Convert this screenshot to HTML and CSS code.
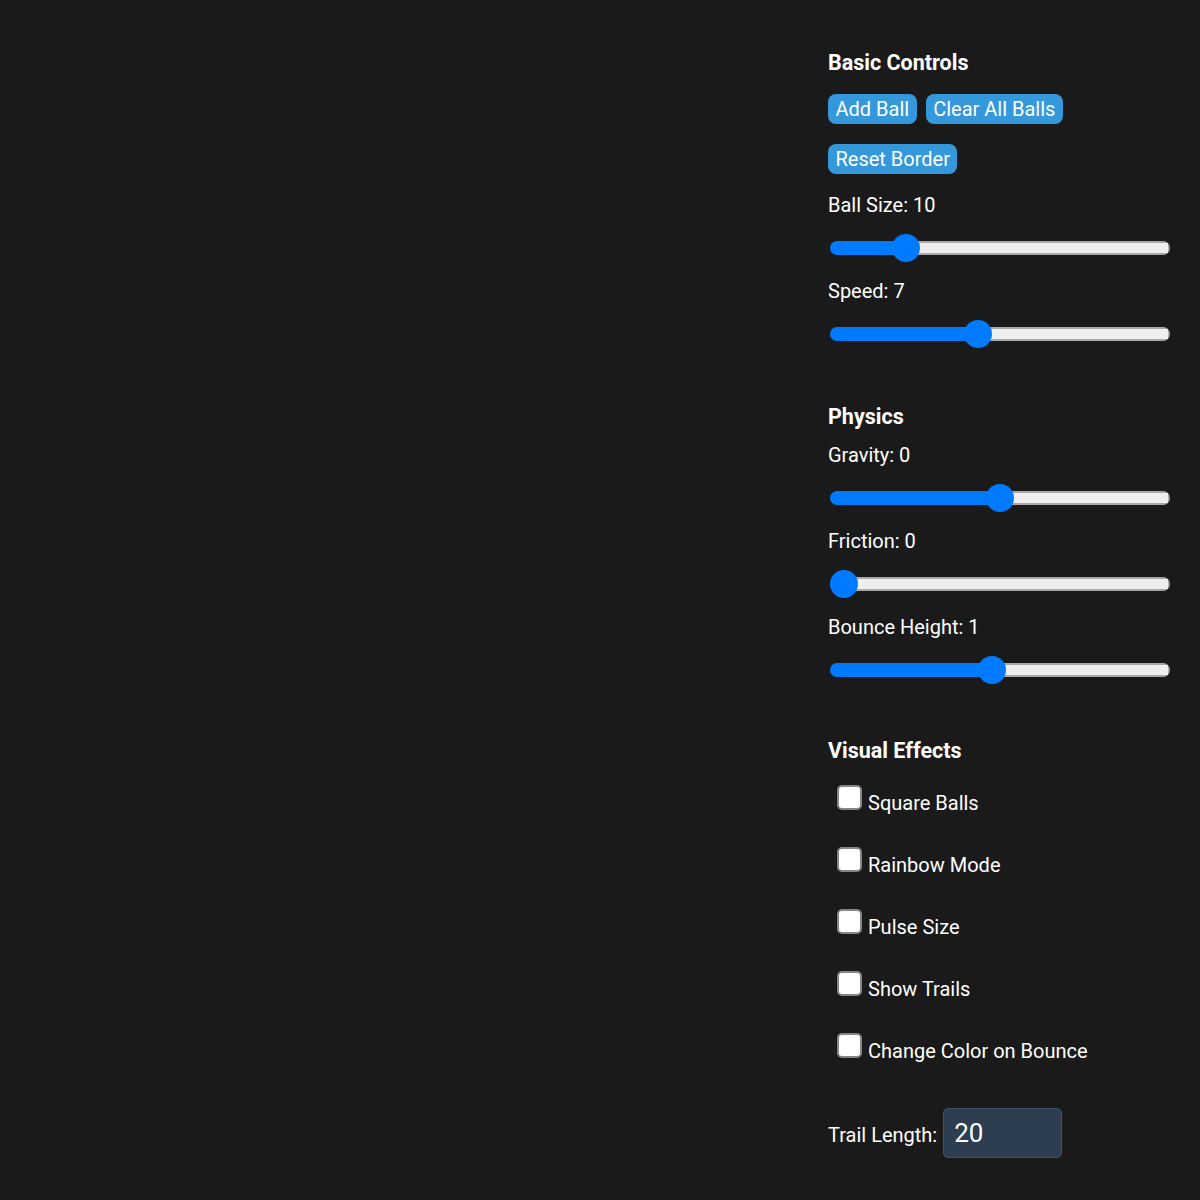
FILE: index.html
```html
<!DOCTYPE html>
<html lang="en">
<head>
<meta charset="utf-8">
<title>Bouncing Balls</title>
<link rel="stylesheet" href="styles.css">
</head>
<body>
  <main class="stage"></main>
  <aside class="panel">
    <section class="group group-basic">
      <h3 class="group-title">Basic Controls</h3>
      <div class="btn-row">
        <button class="btn">Add Ball</button>
        <button class="btn">Clear All Balls</button>
        <button class="btn">Reset Border</button>
      </div>
      <div class="field">
        <label class="field-label">Ball Size: 10</label>
        <input class="slider" type="range" min="5" max="30" value="10" style="--p: 0.2">
      </div>
      <div class="field">
        <label class="field-label">Speed: 7</label>
        <input class="slider" type="range" min="1" max="15" value="7" style="--p: 0.4286">
      </div>
    </section>

    <section class="group">
      <h3 class="group-title">Physics</h3>
      <div class="field">
        <label class="field-label">Gravity: 0</label>
        <input class="slider" type="range" min="-1" max="1" step="0.1" value="0" style="--p: 0.5">
      </div>
      <div class="field">
        <label class="field-label">Friction: 0</label>
        <input class="slider" type="range" min="0" max="0.1" step="0.01" value="0" style="--p: 0">
      </div>
      <div class="field">
        <label class="field-label">Bounce Height: 1</label>
        <input class="slider" type="range" min="0.1" max="2" step="0.1" value="1" style="--p: 0.4737">
      </div>
    </section>

    <section class="group group-effects">
      <h3 class="group-title">Visual Effects</h3>
      <label class="check"><input type="checkbox" class="check-box"><span>Square Balls</span></label>
      <label class="check"><input type="checkbox" class="check-box"><span>Rainbow Mode</span></label>
      <label class="check"><input type="checkbox" class="check-box"><span>Pulse Size</span></label>
      <label class="check"><input type="checkbox" class="check-box"><span>Show Trails</span></label>
      <label class="check"><input type="checkbox" class="check-box"><span>Change Color on Bounce</span></label>
      <div class="trail">
        <label class="trail-label">Trail Length:</label><input class="num" type="number" value="20" min="1" max="100">
      </div>
    </section>
  </aside>
</body>
</html>
```

FILE: styles.css
```css
* { box-sizing: border-box; }

html, body {
  margin: 0;
  height: 100%;
}

body {
  background: #1a1a1a;
  color: #ffffff;
  font-family: Roboto, "Liberation Sans", sans-serif;
  font-size: 20px;
  display: flex;
}

.stage {
  flex: 1;
}

.panel {
  width: 372px;
  padding: 51px 32px 0 0;
}

.group-title {
  margin: 0;
  font-size: 21.5px;
  line-height: 24px;
  font-weight: 700;
}

.group + .group {
  margin-top: 57px;
}

.group-effects {
  margin-top: 55px !important;
}

/* buttons */
.btn-row {
  display: flex;
  flex-wrap: wrap;
  column-gap: 9px;
  row-gap: 20px;
  margin: 19px 0 19px;
  width: 340px;
}

.btn {
  font: inherit;
  font-size: 20px;
  line-height: 24px;
  height: 30px;
  padding: 0 7.5px;
  color: #ffffff;
  background: #3498db;
  border: none;
  border-radius: 8px;
}

/* slider fields */
.field-label {
  display: block;
  line-height: 24px;
}

.group-title + .field .field-label {
  margin-top: 14px;
}

.field + .field .field-label {
  margin-top: 17px;
}

.slider {
  -webkit-appearance: none;
  appearance: none;
  display: block;
  width: 340px;
  height: 28px;
  margin: 17px 2px 0;
  background: transparent;
}

/* the track is a grey-rimmed pill; blue fill runs up to the thumb centre */
.slider::-webkit-slider-runnable-track {
  height: 14px;
  border-radius: 7px;
  border: none;
  background:
    linear-gradient(to right, #007bff calc(14px + var(--p) * (100% - 28px)), transparent calc(14px + var(--p) * (100% - 28px))),
    linear-gradient(#efefef, #efefef) center / calc(100% - 4px) 10px no-repeat,
    #a9a9a9;
}

.slider::-webkit-slider-thumb {
  -webkit-appearance: none;
  appearance: none;
  width: 28px;
  height: 28px;
  margin-top: -7px;
  border-radius: 50%;
  background: #007bff;
  border: none;
}

/* checkboxes */
.check {
  display: flex;
  align-items: flex-start;
  height: 30px;
  margin-top: 32px;
}

.group-title + .check {
  margin-top: 22px;
}

.check-box {
  -webkit-appearance: none;
  appearance: none;
  width: 25px;
  height: 25px;
  margin: 0 6px 0 9px;
  background: #ffffff;
  border: 2px solid #858585;
  border-radius: 5px;
}

.check span {
  padding-top: 6px;
  line-height: 24px;
}

/* trail length */
.trail {
  margin-top: 45px;
  display: flex;
  align-items: baseline;
}

.trail-label {
  margin-right: 6px;
}

.num {
  -moz-appearance: textfield;
  width: 119px;
  height: 50px;
  padding: 0 10px;
  font-family: inherit;
  font-size: 26px;
  color: #ffffff;
  background: #2c3e50;
  border: 1px solid #3f5266;
  border-radius: 5px;
}

.num::-webkit-inner-spin-button,
.num::-webkit-outer-spin-button {
  -webkit-appearance: none;
  margin: 0;
}
```
